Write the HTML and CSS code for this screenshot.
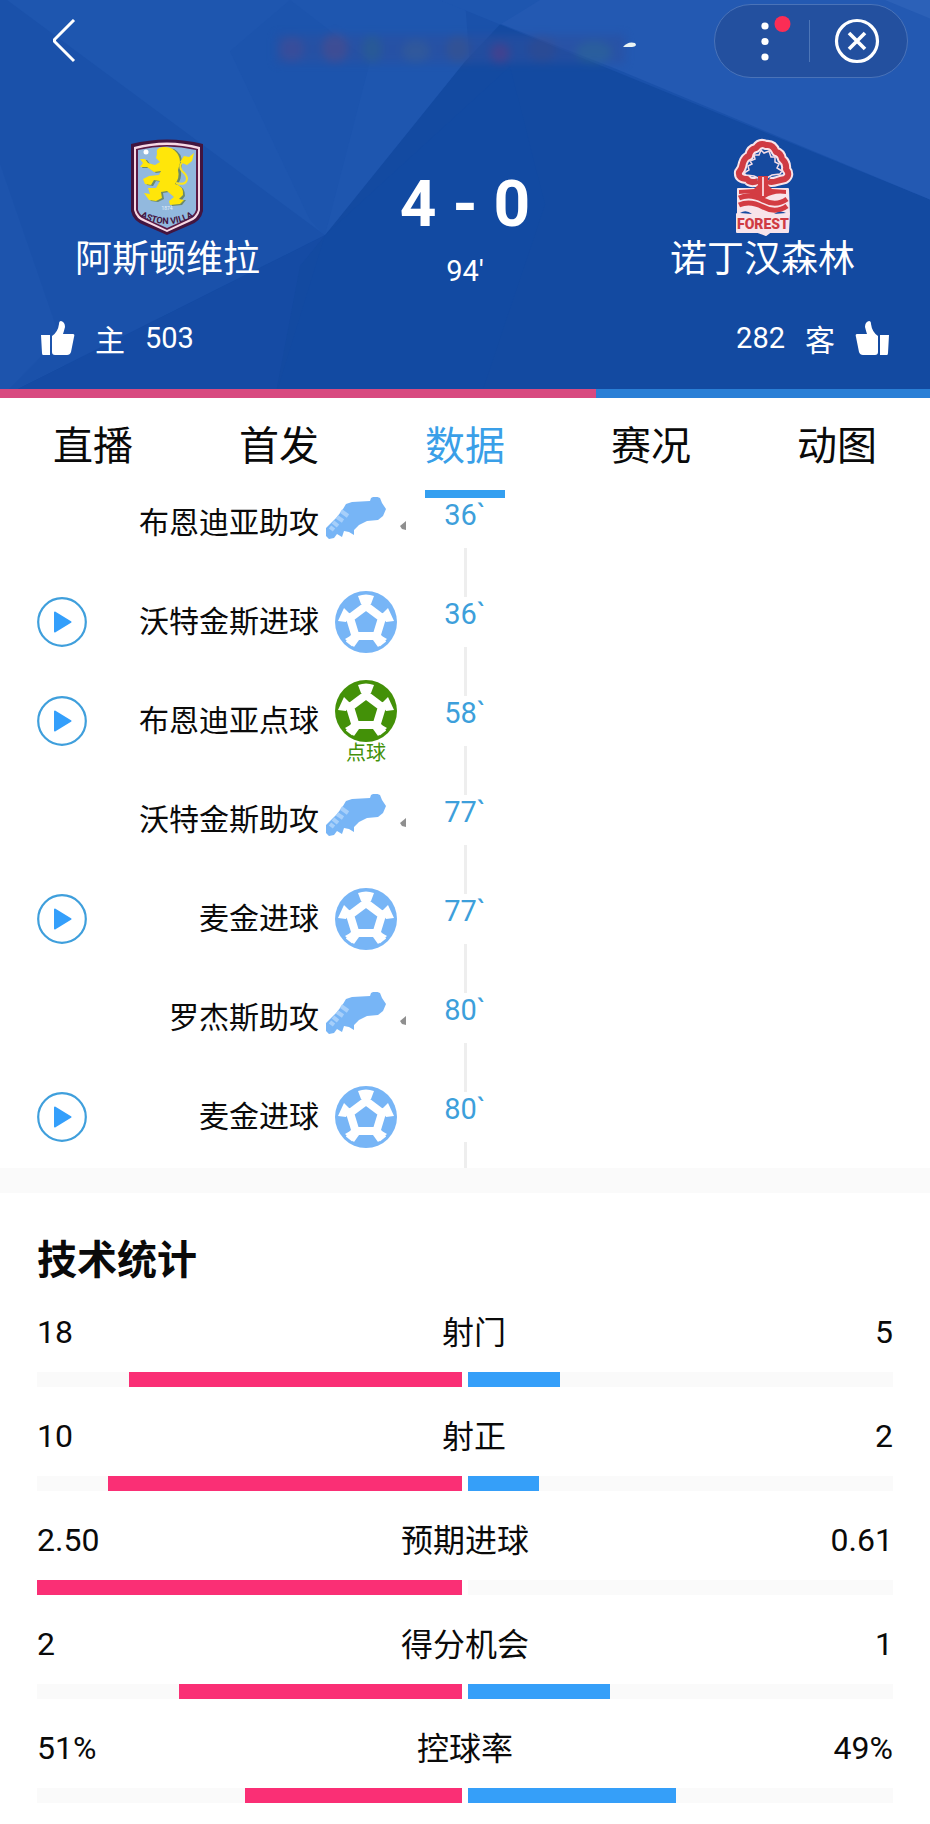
FILE: index.html
```html
<!DOCTYPE html>
<html lang="zh-CN">
  <head>
    <meta charset="UTF-8" />
    <meta name="viewport" content="width=device-width, initial-scale=1.0" />
    <title>阿斯顿维拉 4 - 0 诺丁汉森林</title>
    <link rel="stylesheet" href="styles.css">
  </head>

  <body>
    <!-- 图标 -->
    <svg class="sprite" aria-hidden="true">
      <symbol id="icon-play" viewBox="0 0 50 50">
        <circle cx="25" cy="25" r="23.8" fill="#fff" stroke="#3f9fdc" stroke-width="2.2" />
        <path d="M18 15.5 33.5 25 18 34.5Z" fill="#349ffb" stroke="#349ffb" stroke-width="2" stroke-linejoin="round" />
      </symbol>
      <symbol id="icon-ball" viewBox="0 0 62 62">
        <circle cx="31" cy="31" r="31" fill="currentColor" />
        <g fill="none" stroke="#fff" stroke-width="8" stroke-linejoin="miter">
          <path d="M31 15 47 27 41.500 45H20.500L15 27Z" />
          <path d="M31 16V6M46 27l9-3M41 44l7 9M21 44l-7 9M16 27l-9-3" />
        </g>
        <g fill="#fff">
          <path d="M23 5q8-3 16 0l-3 8H26Z" />
          <path d="m53 17 6 13-8 1-4-8Z" />
          <path d="m9 17-6 13 8 1 4-8Z" />
          <path d="m52 48-9 8-5-7 7-5Z" />
          <path d="m10 48 9 8 5-7-7-5Z" />
        </g>
      </symbol>
      <symbol id="icon-boot" viewBox="0 0 80 52">
        <path d="M20 7 26 5 44 4 45 1 49-1 54 1 56 6 60 12 57 19 52 23 41 24 33 28 28 33 28 38 23 35 18 34 16 40 11 37 8 41 3 42 0 39 0 31 11 20 17 12Z" fill="#77b5f6" />
        <path d="m15 14 7 5M11 20l6 4M7 25l5 4M4 30l4 3" fill="none" stroke="#a6cffa" stroke-width="4" />
        <path d="M74 29 80 24V33L76 32Z" fill="#8f8f8f" />
      </symbol>
      <symbol id="icon-thumb" viewBox="0 0 34 34">
        <path d="M0 14H9V34H2Q1 34 1 32Z" />
        <path d="M11 15Q17 11 18 3 18 0 20 0 24 1 24 6 23 10 22 13H32Q34 13 33 16L30 31Q29 34 26 34H14Q11 34 11 31Z" />
      </symbol>
    </svg>

    <header class="match">
      <svg class="match-bg" viewBox="0 0 930 389" preserveAspectRatio="none" aria-hidden="true">
        <path d="M0 0H930V389H0Z" fill="#1a51aa" />
        <path d="M7 0 325 230 470 65 465 0Z" fill="#1e56af" />
        <path d="M230 50 310 215 325 230 370 60 290 0Z" fill="#1c54ad" />
        <path d="M0 389 325 230 465 60 500 24 930 195V389Z" fill="#134aa1" />
        <path d="M325 230 510 65 545 200 480 389H275Z" fill="#124aa2" />
        <path d="M325 230 300 260 275 389H0Z" fill="#154ba4" />
        <path d="M0 160 60 330 0 389Z" fill="#1d54ad" />
        <path d="M440 0 615 67 930 195V0Z" fill="#2359b2" />
        <path d="M440 0 500 24 540 0Z" fill="#1e56af" />
        <path d="M885 0 930 18V0Z" fill="#2c61b8" />
        <g class="smudge">
          <path d="M276 34H625V62H276Z" fill="#2c4f9f" />
          <ellipse cx="292" cy="48" rx="12" ry="12" fill="#4a4a90" />
          <ellipse cx="335" cy="47" rx="13" ry="14" fill="#544a86" />
          <ellipse cx="372" cy="48" rx="10" ry="13" fill="#2f5c88" />
          <ellipse cx="416" cy="50" rx="14" ry="11" fill="#3c5a90" />
          <ellipse cx="458" cy="48" rx="12" ry="13" fill="#3f5086" />
          <ellipse cx="500" cy="52" rx="10" ry="10" fill="#5e3f86" />
          <ellipse cx="542" cy="48" rx="14" ry="13" fill="#3a4c8e" />
          <ellipse cx="594" cy="51" rx="18" ry="11" fill="#2f6290" />
        </g>
        <path d="M623 46Q628 40 635 42 638 45 632 46Z" fill="#eaf4f4" />
      </svg>

      <div class="topbar">
        <button type="button" class="back" aria-label="返回">
          <svg width="24" height="44" viewBox="0 0 24 44" fill="none" stroke="#fff" stroke-width="3">
            <path d="M22 1 2.500 20.500V22.500L22 42" />
          </svg>
        </button>
        <div class="capsule">
          <button type="button" class="more" aria-label="更多">
            <svg width="32" height="44" viewBox="0 0 32 44" fill="#fff">
              <circle cx="6" cy="7" r="3.600" />
              <circle cx="6" cy="22.500" r="3.600" />
              <circle cx="6" cy="38" r="3.600" />
              <circle cx="23.500" cy="5" r="8" fill="#fb2d55" />
            </svg>
          </button>
          <button type="button" class="close" aria-label="关闭">
            <svg width="46" height="46" viewBox="0 0 46 46" fill="none" stroke="#fff">
              <circle cx="23" cy="23" r="20.500" stroke-width="3.200" />
              <path d="m15 15 16 16M31 15 15 31" stroke-width="3.600" />
            </svg>
          </button>
        </div>
      </div>

      <div class="versus">
        <div class="team">
          <svg class="crest" width="74" height="97" viewBox="0 0 74 97" role="img" aria-label="阿斯顿维拉队徽">
            <path d="M1 5Q37-4 73 5V72Q71 82 60 86L37 96 14 86Q3 82 1 72Z" fill="#43153f" />
            <path d="M4 8Q37-1 70 8V71Q68 80 59 83L37 93 15 83Q6 80 4 71Z" fill="#f6d9e6" />
            <path d="M6 10Q37 2 68 10V71Q66 78 58 81L37 91 16 81Q8 78 6 71Z" fill="#5c1a45" />
            <path d="M8 11Q37 4 66 11V71Q64 77 57 80L37 89 17 80Q10 77 8 71Z" fill="#92b9de" />
            <circle cx="16" cy="13" r="2.500" fill="#fff" />
            <g transform="translate(0 -1)">
              <path d="M27 16Q32 8 42 10 50 14 50 24L49 32Q50 40 45 46 53 48 53 57L50 61H54L50 66 40 67 39 63 44 59 37 53 31 54 32 60 26 63 19 62 14 55 20 56 18 50 26 50 30 43 24 42 21 47 15 46 13 41 19 38 29 37 31 33 24 34 17 29 10 29 12 25 10 21 15 21 18 25 25 27 30 24 26 20Z" fill="#6d8a68" transform="translate(2 1)" />
              <path d="M27 16Q25 10 33 9 42 8 47 15 50 19 50 25L48 32Q50 40 45 46 54 48 53 57L49 61 54 62 50 66 40 67 39 63 44 59 37 53 31 54 32 60 26 63 19 62 14 55 20 56 18 50 26 50 30 43 24 42 21 47 15 46 13 41 19 38 29 37 31 33 24 34 17 29 10 29 13 25 10 21 15 21 18 25 25 27 30 24 26 20Z" fill="#ffe60a" />
              <path d="M46 45Q57 48 57 40 56 36 52 33 48 27 53 24" fill="none" stroke="#fbe51e" stroke-width="2" />
              <path d="m50 24 4-6 5 1 5-4-2 8-5 4Z" fill="#ffe60a" />
            </g>
            <text x="37" y="71" class="crest-year">1874</text>
            <path id="villa-arc" d="M9 77Q37 93 65 77" fill="none" />
            <text class="crest-villa"><textPath href="#villa-arc" startOffset="50%">ASTON VILLA</textPath></text>
          </svg>
          <h2 class="team-name">阿斯顿维拉</h2>
        </div>
        <div class="result">
          <p class="score">4 - 0</p>
          <p class="minute">94'</p>
        </div>
        <div class="team">
          <svg class="crest" width="58" height="97" viewBox="0 0 58 97" role="img" aria-label="诺丁汉森林队徽">
            <path d="M24 42V50H4V75H3V93H24L32 96 36 93H54L55 75 54 50H35V42" fill="#f8e4ea" stroke="#f8e4ea" stroke-width="2" stroke-linejoin="round" />
            <g fill="none" stroke-linejoin="round">
              <path d="M24 42Q16 45 13 40 4 40 5 33 8 30 9 24 11 18 15 17 16 10 22 9 26 3 32 6 39 5 42 13 47 14 48 20 53 24 52 30 57 36 51 40 46 41 43 42 37 44 34 42" stroke="#f8e4ea" stroke-width="10" />
              <path d="M24 42Q16 45 13 40 4 40 5 33 8 30 9 24 11 18 15 17 16 10 22 9 26 3 32 6 39 5 42 13 47 14 48 20 53 24 52 30 57 36 51 40 46 41 43 42 37 44 34 42" stroke="#cf3b43" stroke-width="6" />
            </g>
            <path d="M12 36 10 34 15 31 14 27 18 25 16 22 21 20 20 16 25 16 27 11 30 14 35 12 37 18 41 18 41 23 45 25 43 29 48 32 46 35 38 36 33 39H24L20 37Z" fill="#164a9f" stroke="#f3dce6" stroke-width="1.500" />
            <path d="M24 37H34V46L38 50 52 51V55Q40 53 31 59H27Q17 53 5 55V51L20 50 24 46Z" fill="#d33c43" />
            <path d="M29 38V57" stroke="#f6cbd2" stroke-width="2" />
            <path d="M5 59Q16 54 29 61T53 60M5 66Q16 61 29 68T53 67" fill="none" stroke="#d33c43" stroke-width="5" />
            <path d="M6 74Q12 70 18 75ZM40 75Q46 71 52 74Z" fill="#164a9f" />
            <text x="29" y="90" class="crest-forest">FOREST</text>
          </svg>
          <h2 class="team-name">诺丁汉森林</h2>
        </div>
      </div>

      <div class="likes">
        <button type="button" class="like">
          <svg class="thumb"><use href="#icon-thumb" /></svg>
          <span class="side">主</span>
          <span class="count">503</span>
        </button>
        <button type="button" class="like">
          <span class="count">282</span>
          <span class="side">客</span>
          <svg class="thumb thumb-away"><use href="#icon-thumb" /></svg>
        </button>
      </div>
      <div class="like-bar">
        <div class="like-home" style="width: 64.08%"></div>
      </div>
    </header>

    <nav class="tabs">
      <a href="#live">直播</a>
      <a href="#lineup">首发</a>
      <a href="#stats" class="active" aria-current="page">数据</a>
      <a href="#report">赛况</a>
      <a href="#gif">动图</a>
    </nav>

    <main id="stats">
      <ol class="events">
        <li class="event">
          <div class="event-home">
            <span class="event-label">布恩迪亚助攻</span>
            <span class="event-icon"><svg class="boot"><use href="#icon-boot" /></svg></span>
          </div>
          <div class="event-time"><time>36`</time></div>
        </li>
        <li class="event">
          <div class="event-home">
            <button type="button" class="play" aria-label="播放"><svg><use href="#icon-play" /></svg></button>
            <span class="event-label">沃特金斯进球</span>
            <span class="event-icon"><svg class="ball"><use href="#icon-ball" /></svg></span>
          </div>
          <div class="event-time"><time>36`</time></div>
        </li>
        <li class="event">
          <div class="event-home">
            <button type="button" class="play" aria-label="播放"><svg><use href="#icon-play" /></svg></button>
            <span class="event-label">布恩迪亚点球</span>
            <span class="event-icon penalty"><svg class="ball"><use href="#icon-ball" /></svg>点球</span>
          </div>
          <div class="event-time"><time>58`</time></div>
        </li>
        <li class="event">
          <div class="event-home">
            <span class="event-label">沃特金斯助攻</span>
            <span class="event-icon"><svg class="boot"><use href="#icon-boot" /></svg></span>
          </div>
          <div class="event-time"><time>77`</time></div>
        </li>
        <li class="event">
          <div class="event-home">
            <button type="button" class="play" aria-label="播放"><svg><use href="#icon-play" /></svg></button>
            <span class="event-label">麦金进球</span>
            <span class="event-icon"><svg class="ball"><use href="#icon-ball" /></svg></span>
          </div>
          <div class="event-time"><time>77`</time></div>
        </li>
        <li class="event">
          <div class="event-home">
            <span class="event-label">罗杰斯助攻</span>
            <span class="event-icon"><svg class="boot"><use href="#icon-boot" /></svg></span>
          </div>
          <div class="event-time"><time>80`</time></div>
        </li>
        <li class="event">
          <div class="event-home">
            <button type="button" class="play" aria-label="播放"><svg><use href="#icon-play" /></svg></button>
            <span class="event-label">麦金进球</span>
            <span class="event-icon"><svg class="ball"><use href="#icon-ball" /></svg></span>
          </div>
          <div class="event-time"><time>80`</time></div>
        </li>
      </ol>

      <section class="tech">
        <h2>技术统计</h2>
        <ul class="stats">
          <li>
            <div class="stat-text"><span>18</span><span class="stat-name">射门</span><span>5</span></div>
            <div class="stat-bars">
              <div class="track home"><div style="width: 78.26%"></div></div>
              <div class="track away"><div style="width: 21.74%"></div></div>
            </div>
          </li>
          <li>
            <div class="stat-text"><span>10</span><span class="stat-name">射正</span><span>2</span></div>
            <div class="stat-bars">
              <div class="track home"><div style="width: 83.33%"></div></div>
              <div class="track away"><div style="width: 16.67%"></div></div>
            </div>
          </li>
          <li>
            <div class="stat-text"><span>2.50</span><span class="stat-name">预期进球</span><span>0.61</span></div>
            <div class="stat-bars">
              <div class="track home"><div style="width: 100%"></div></div>
              <div class="track away"><div style="width: 0%"></div></div>
            </div>
          </li>
          <li>
            <div class="stat-text"><span>2</span><span class="stat-name">得分机会</span><span>1</span></div>
            <div class="stat-bars">
              <div class="track home"><div style="width: 66.67%"></div></div>
              <div class="track away"><div style="width: 33.33%"></div></div>
            </div>
          </li>
          <li>
            <div class="stat-text"><span>51%</span><span class="stat-name">控球率</span><span>49%</span></div>
            <div class="stat-bars">
              <div class="track home"><div style="width: 51%"></div></div>
              <div class="track away"><div style="width: 49%"></div></div>
            </div>
          </li>
        </ul>
      </section>
    </main>
  </body>
</html>
```

FILE: styles.css
```css
* {
  box-sizing: border-box;
  margin: 0;
  padding: 0;
}

body {
  background-color: #fff;
  color: #0a0a0a;
  font-family: Roboto, "Noto Sans CJK SC", sans-serif;
}

button {
  border: 0;
  background: none;
  color: inherit;
  font: inherit;
  cursor: pointer;
}

svg {
  display: block;
}

ul,
ol {
  list-style: none;
}

.sprite {
  position: absolute;
  width: 0;
  height: 0;
}

/* 比分头部 */
.match {
  position: relative;
  background-color: #134aa1;
  color: #fff;
}

.match-bg {
  position: absolute;
  inset: 0;
  z-index: 0;
  width: 100%;
  height: 100%;
}

.smudge {
  opacity: 0.6;
  filter: blur(4px);
}

.topbar,
.versus,
.likes,
.like-bar {
  position: relative;
}

.topbar {
  display: flex;
  justify-content: space-between;
  align-items: center;
  padding: 4px 22px 0 52px;
}

.capsule {
  display: flex;
  align-items: center;
  width: 194px;
  height: 74px;
  border: 1px solid #4a73b8;
  border-radius: 37px;
  background-color: #23509f;
}

.more,
.close {
  display: flex;
  align-items: center;
}

.more {
  width: 95px;
  height: 42px;
  padding-left: 44px;
  border-right: 1px solid #4d76b8;
}

.more svg {
  overflow: visible;
}

.close {
  padding-left: 24px;
}

.versus {
  display: grid;
  grid-template-columns: 36fr 28fr 36fr;
  margin-top: 61px;
}

.team {
  display: flex;
  flex-direction: column;
  align-items: center;
}

.team-name {
  font-family: "Noto Sans CJK SC", sans-serif;
  font-size: 37px;
  font-weight: 400;
  line-height: 40px;
}

.crest {
  overflow: visible;
}

.crest-year {
  fill: #e4f1fb;
  font-size: 5px;
  text-anchor: middle;
}

.crest-villa {
  fill: #43153f;
  font-size: 9px;
  font-weight: 700;
  text-anchor: middle;
}

.crest-forest {
  fill: #cf3b43;
  font-size: 14px;
  font-weight: 900;
  text-anchor: middle;
}

.result {
  padding-top: 30px;
  text-align: center;
}

.score {
  font-size: 64px;
  font-weight: 700;
  line-height: 72px;
}

.minute {
  margin-top: 12px;
  font-size: 29px;
  line-height: 36px;
}

.likes {
  display: flex;
  justify-content: space-between;
  padding: 27px 41px 29px;
}

.like {
  display: flex;
  align-items: center;
  gap: 20px;
  font-size: 29px;
  line-height: 44px;
}

.side {
  font-family: "Noto Sans CJK SC", sans-serif;
  font-size: 30px;
}

.thumb {
  width: 34px;
  height: 34px;
  fill: #fff;
}

.thumb-away {
  transform: scaleX(-1);
}

.like-bar {
  height: 9px;
  background-color: #2a7fd6;
}

.like-home {
  height: 100%;
  background-color: #d84a80;
}

/* 标签页 */
.tabs {
  display: flex;
}

.tabs a {
  flex: 1;
  display: flex;
  flex-direction: column;
  align-items: center;
  padding-top: 15px;
  color: inherit;
  font-family: "Noto Sans CJK SC", sans-serif;
  font-size: 40px;
  line-height: 60px;
  text-decoration: none;
}

.tabs a::after {
  content: "";
  width: 80px;
  height: 8px;
  margin-top: 17px;
}

.tabs .active {
  color: #3a9fe8;
}

.tabs .active::after {
  background-color: #349ff0;
}

/* 比赛事件 */
.event {
  display: grid;
  grid-template-columns: 1fr 118px 1fr;
  height: 99px;
}

.event:last-child {
  height: 76px;
}

.event-home {
  display: flex;
  align-items: center;
  height: 50px;
  padding-left: 37px;
}

.play svg {
  width: 50px;
  height: 50px;
}

.event-label {
  margin-left: auto;
  padding-bottom: 6px;
  font-family: "Noto Sans CJK SC", sans-serif;
  font-size: 30px;
  line-height: 40px;
}

.event-icon {
  display: flex;
  flex-direction: column;
  align-items: center;
  width: 80px;
  margin-left: 7px;
  color: #77b5f6;
}

.penalty {
  color: #439108;
  font-family: "Noto Sans CJK SC", sans-serif;
  font-size: 20px;
  line-height: 20px;
}

.ball {
  width: 62px;
  height: 62px;
}

.boot {
  width: 80px;
  height: 52px;
}

.event-time {
  display: flex;
  flex-direction: column;
  align-items: center;
  color: #3d9fdb;
  font-size: 29px;
  line-height: 34px;
}

.event-time time {
  height: 50px;
}

.event-time::after {
  content: "";
  flex: 1;
  width: 3px;
  background-color: #eee;
}

/* 技术统计 */
.tech {
  padding: 34px 37px 21px;
  border-top: 25px solid #fafafa;
}

.tech h2 {
  margin-bottom: 21px;
  font-family: "Noto Sans CJK SC", sans-serif;
  font-size: 40px;
  line-height: 60px;
}

.stats {
  display: grid;
  gap: 25px;
}

.stat-text {
  display: flex;
  justify-content: space-between;
  font-size: 32px;
  line-height: 48px;
}

.stat-name {
  font-family: "Noto Sans CJK SC", sans-serif;
  line-height: 44px;
}

.stat-bars {
  display: flex;
  gap: 6px;
  margin-top: 16px;
}

.track {
  flex: 1;
  display: flex;
  height: 15px;
  background-color: #fafafa;
}

.track.home {
  justify-content: flex-end;
}

.home div {
  background-color: #fa2f75;
}

.away div {
  background-color: #359ff9;
}
```
